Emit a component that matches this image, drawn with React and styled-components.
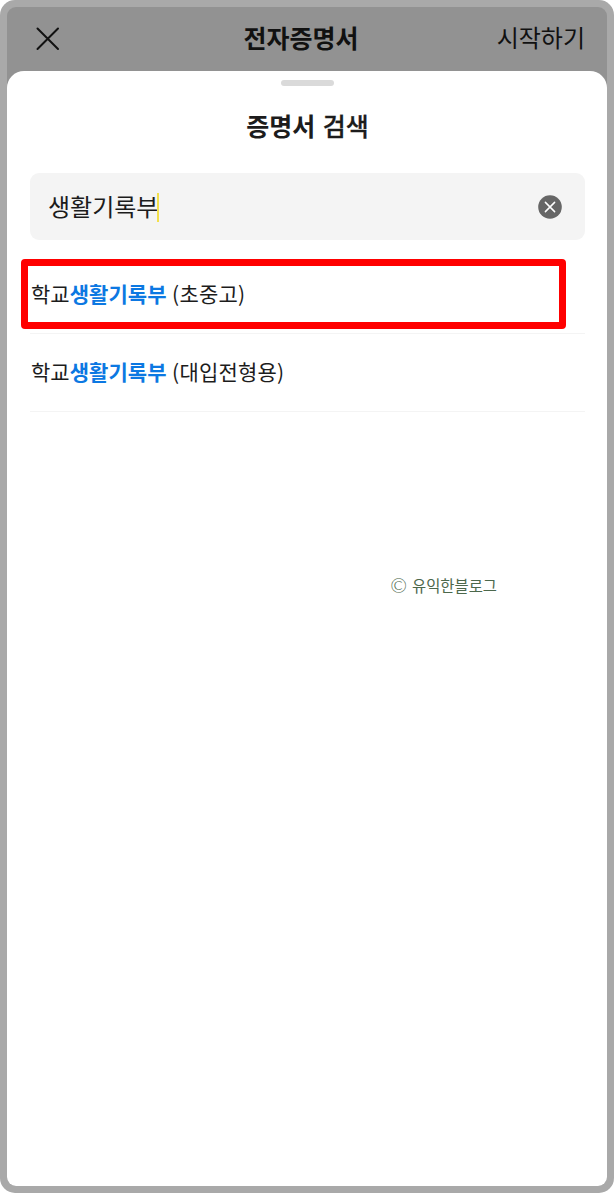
import styled, { createGlobalStyle } from 'styled-components'

const GlobalStyle = createGlobalStyle`
    * {
        box-sizing: border-box;
    }

    body {
        margin: 0;
        background-color: #ffffff;
        font-family: 'Noto Sans CJK KR', 'Noto Sans', sans-serif;
        color: #1c1c1c;
    }
`

const PhoneFrame = styled.div`
    display: flex;
    width: 614px;
    height: 1193px;
    padding: 7px;
    border-radius: 15px;
    background-color: #a9a9a9;
`

const Screen = styled.div`
    display: flex;
    flex-direction: column;
    flex: 1;
    border-radius: 9px;
    overflow: hidden;
    background-color: #929292;
`

const Header = styled.header`
    display: grid;
    grid-template-columns: 1fr auto 1fr;
    align-items: center;
    height: 64px;
    padding: 0 22px 0 10px;
    color: #111111;
`

const IconButton = styled.button`
    display: flex;
    justify-self: start;
    padding: 0;
    border: none;
    background: none;
    color: inherit;
`

const CloseButton = styled(IconButton)`
    margin-left: 19px;
`

const HeaderTitle = styled.h1`
    margin: 0 0 4px;
    font-size: 25px;
    line-height: 36px;
    font-weight: 700;
`

const HeaderAction = styled.span`
    justify-self: end;
    margin-bottom: 4px;
    font-size: 24px;
    line-height: 36px;
`

const Sheet = styled.main`
    display: flex;
    flex-direction: column;
    flex: 1;
    padding: 9px 22px 0 23px;
    border-radius: 17px 17px 0 0;
    background-color: #ffffff;
`

const Handle = styled.div`
    align-self: center;
    width: 53px;
    height: 6px;
    border-radius: 3px;
    background-color: #dadada;
`

const SheetTitle = styled.h2`
    margin: 21px 0 30px;
    font-size: 25px;
    line-height: 36px;
    font-weight: 500;
    text-align: center;
    word-spacing: 2px;
    -webkit-text-stroke: 0.3px #1c1c1c;

    strong {
        font-weight: 700;
        -webkit-text-stroke: 0;
    }
`

const SearchField = styled.div`
    display: flex;
    align-items: center;
    height: 67px;
    padding: 0 23px 0 18px;
    border-radius: 9px;
    background-color: #f4f4f4;
`

const SearchText = styled.span`
    margin-bottom: 2px;
    font-size: 24px;
    line-height: 36px;
`

const Caret = styled.span`
    width: 2px;
    height: 29px;
    margin-top: 2px;
    margin-right: auto;
    margin-left: -1px;
    background-color: #f3e04c;
`

const ResultList = styled.ul`
    margin: 16px 0 0;
    padding: 0;
    list-style: none;
`

const ResultItem = styled.li`
    position: relative;
    display: flex;
    align-items: center;
    height: 78px;
    padding: 0 0 4px 1px;
    border-bottom: 1px solid #f4f4f4;
    font-size: 21px;
    line-height: 32px;
    letter-spacing: 0.05px;
    word-spacing: 0.6px;
    white-space: pre;
`

const Match = styled.strong`
    font-weight: 700;
    color: #0c78e2;
`

const Suffix = styled.span`
    letter-spacing: 0.2px;
`

// Red marker laid over the row to pick
const Marker = styled.div`
    position: absolute;
    top: 3px;
    left: -9px;
    width: 545px;
    height: 70px;
    border: 7px solid #ff0000;
    border-radius: 4px;
`

const Credit = styled.p`
    display: flex;
    align-items: center;
    align-self: flex-end;
    gap: 5px;
    margin: 161px 88px 0 0;
    font-size: 15.4px;
    line-height: 24px;
    color: #4c684c;
`

const CopyrightSign = styled.span`
    font-family: 'Lato', sans-serif;
    font-size: 20px;
    font-weight: 300;
`

const results = [
    { prefix: '학교', match: '생활기록부', suffix: ' (초중고)', marked: true },
    { prefix: '학교', match: '생활기록부', suffix: ' (대입전형용)', marked: false }
]

const CloseIcon = () => (
    <svg width="24" height="24" viewBox="0 0 24 24" fill="none" stroke="currentColor" strokeWidth="2" strokeLinecap="round">
        <path d="M1.5 1.5L22 22M22 1.5L1.5 22" />
    </svg>
)

const ClearIcon = () => (
    <svg width="24" height="24" viewBox="0 0 24 24" fill="none">
        <circle cx="12" cy="12" r="11.8" fill="#666666" />
        <path d="M7.4 7.4L16.6 16.6M16.6 7.4L7.4 16.6" stroke="#ffffff" strokeWidth="1.5" strokeLinecap="round" />
    </svg>
)

export default function App() {
    return (
        <>
            <GlobalStyle />
            <PhoneFrame>
                <Screen>
                    <Header>
                        <CloseButton aria-label="닫기">
                            <CloseIcon />
                        </CloseButton>
                        <HeaderTitle>전자증명서</HeaderTitle>
                        <HeaderAction>시작하기</HeaderAction>
                    </Header>
                    <Sheet>
                        <Handle />
                        <SheetTitle>
                            <strong>증명서</strong> 검색
                        </SheetTitle>
                        <SearchField>
                            <SearchText>생활기록부</SearchText>
                            <Caret />
                            <IconButton aria-label="지우기">
                                <ClearIcon />
                            </IconButton>
                        </SearchField>
                        <ResultList>
                            {results.map((result) => (
                                <ResultItem key={result.suffix}>
                                    <span>{result.prefix}<Match>{result.match}</Match></span>
                                    <Suffix>{result.suffix}</Suffix>
                                    {result.marked && <Marker />}
                                </ResultItem>
                            ))}
                        </ResultList>
                        <Credit>
                            <CopyrightSign>©</CopyrightSign>
                            <span>유익한블로그</span>
                        </Credit>
                    </Sheet>
                </Screen>
            </PhoneFrame>
        </>
    )
}
